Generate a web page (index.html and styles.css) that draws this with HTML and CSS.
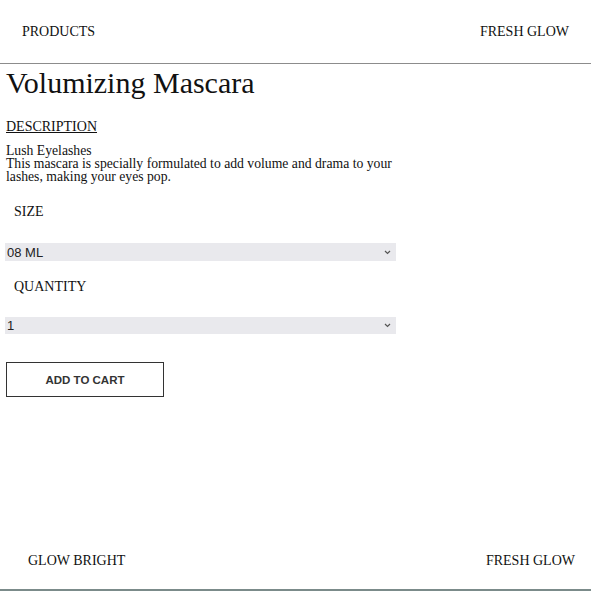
FILE: index.html
```html
<!DOCTYPE html>
<html lang="en">
<head>
<meta charset="utf-8">
<title>Volumizing Mascara</title>
<link rel="stylesheet" href="styles.css">
</head>
<body>
<div class="page">
  <header class="site-header">
    <span class="nav-link">PRODUCTS</span>
    <span class="brand">FRESH GLOW</span>
  </header>
  <main class="product">
    <h1 class="product-title">Volumizing Mascara</h1>
    <a class="desc-heading" href="#">DESCRIPTION</a>
    <p class="desc-text">Lush Eyelashes<br>This mascara is specially formulated to add volume and drama to your lashes, making your eyes pop.</p>
    <label class="field-label" for="size">SIZE</label>
    <select id="size" class="field-select">
      <option>08 ML</option>
    </select>
    <label class="field-label qty-label" for="qty">QUANTITY</label>
    <select id="qty" class="field-select qty-select">
      <option>1</option>
    </select>
    <button class="cart-btn" type="button">ADD TO CART</button>
  </main>
  <footer class="site-footer">
    <span>GLOW BRIGHT</span>
    <span>FRESH GLOW</span>
  </footer>
</div>
</body>
</html>
```

FILE: styles.css
```css
html, body {
  margin: 0;
  padding: 0;
  background: #fff;
}
body {
  font-family: "Liberation Serif", "Times New Roman", serif;
  color: #111;
}
.page {
  min-height: 591px;
  display: flex;
  flex-direction: column;
}
.site-header {
  height: 63px;
  padding: 0 22px;
  display: flex;
  align-items: center;
  justify-content: space-between;
  border-bottom: 1px solid #8c8c8c;
  font-size: 14px;
}
.product {
  flex: 1;
  padding: 0 6px;
  display: flex;
  flex-direction: column;
  align-items: flex-start;
}
.product-title {
  margin: 2px 0 0;
  font-size: 30px;
  font-weight: normal;
  line-height: 34px;
}
.desc-heading {
  margin-top: 19px;
  font-size: 14px;
  line-height: 16px;
  color: #111;
  text-decoration: underline;
}
.desc-text {
  margin: 9px 0 0;
  width: 400px;
  font-size: 13.7px;
  line-height: 13px;
}
.field-label {
  margin-top: 21px;
  padding-left: 8px;
  font-size: 14px;
  line-height: 16px;
}
.qty-label {
  margin-top: 18px;
}
.field-select {
  -webkit-appearance: none;
  appearance: none;
  margin-top: 23px;
  width: 391px;
  height: 18px;
  margin-left: -1px;
  padding: 0 0 0 2px;
  border: none;
  border-radius: 0;
  background-color: #e9e9ed;
  background-image: url("data:image/svg+xml;utf8,<svg xmlns='http://www.w3.org/2000/svg' width='7' height='5' viewBox='0 0 7 5'><path d='M1 1 L3.5 3.5 L6 1' fill='none' stroke='%23555' stroke-width='1.2'/></svg>");
  background-repeat: no-repeat;
  background-position: right 5px center;
  font-family: "Liberation Sans", Arial, sans-serif;
  font-size: 13px;
  color: #222;
}
.qty-select {
  margin-top: 22px;
  height: 17px;
}
.cart-btn {
  margin-top: 28px;
  width: 158px;
  height: 35px;
  background: #fff;
  border: 1px solid #333;
  border-radius: 0;
  font-family: "Liberation Sans", Arial, sans-serif;
  font-size: 11.5px;
  font-weight: bold;
  color: #333;
  padding: 0;
}
.site-footer {
  height: 56px;
  padding: 0 16px 0 28px;
  display: flex;
  align-items: center;
  justify-content: space-between;
  border-bottom: 2px solid #7b8b8a;
  font-size: 14px;
}
```
